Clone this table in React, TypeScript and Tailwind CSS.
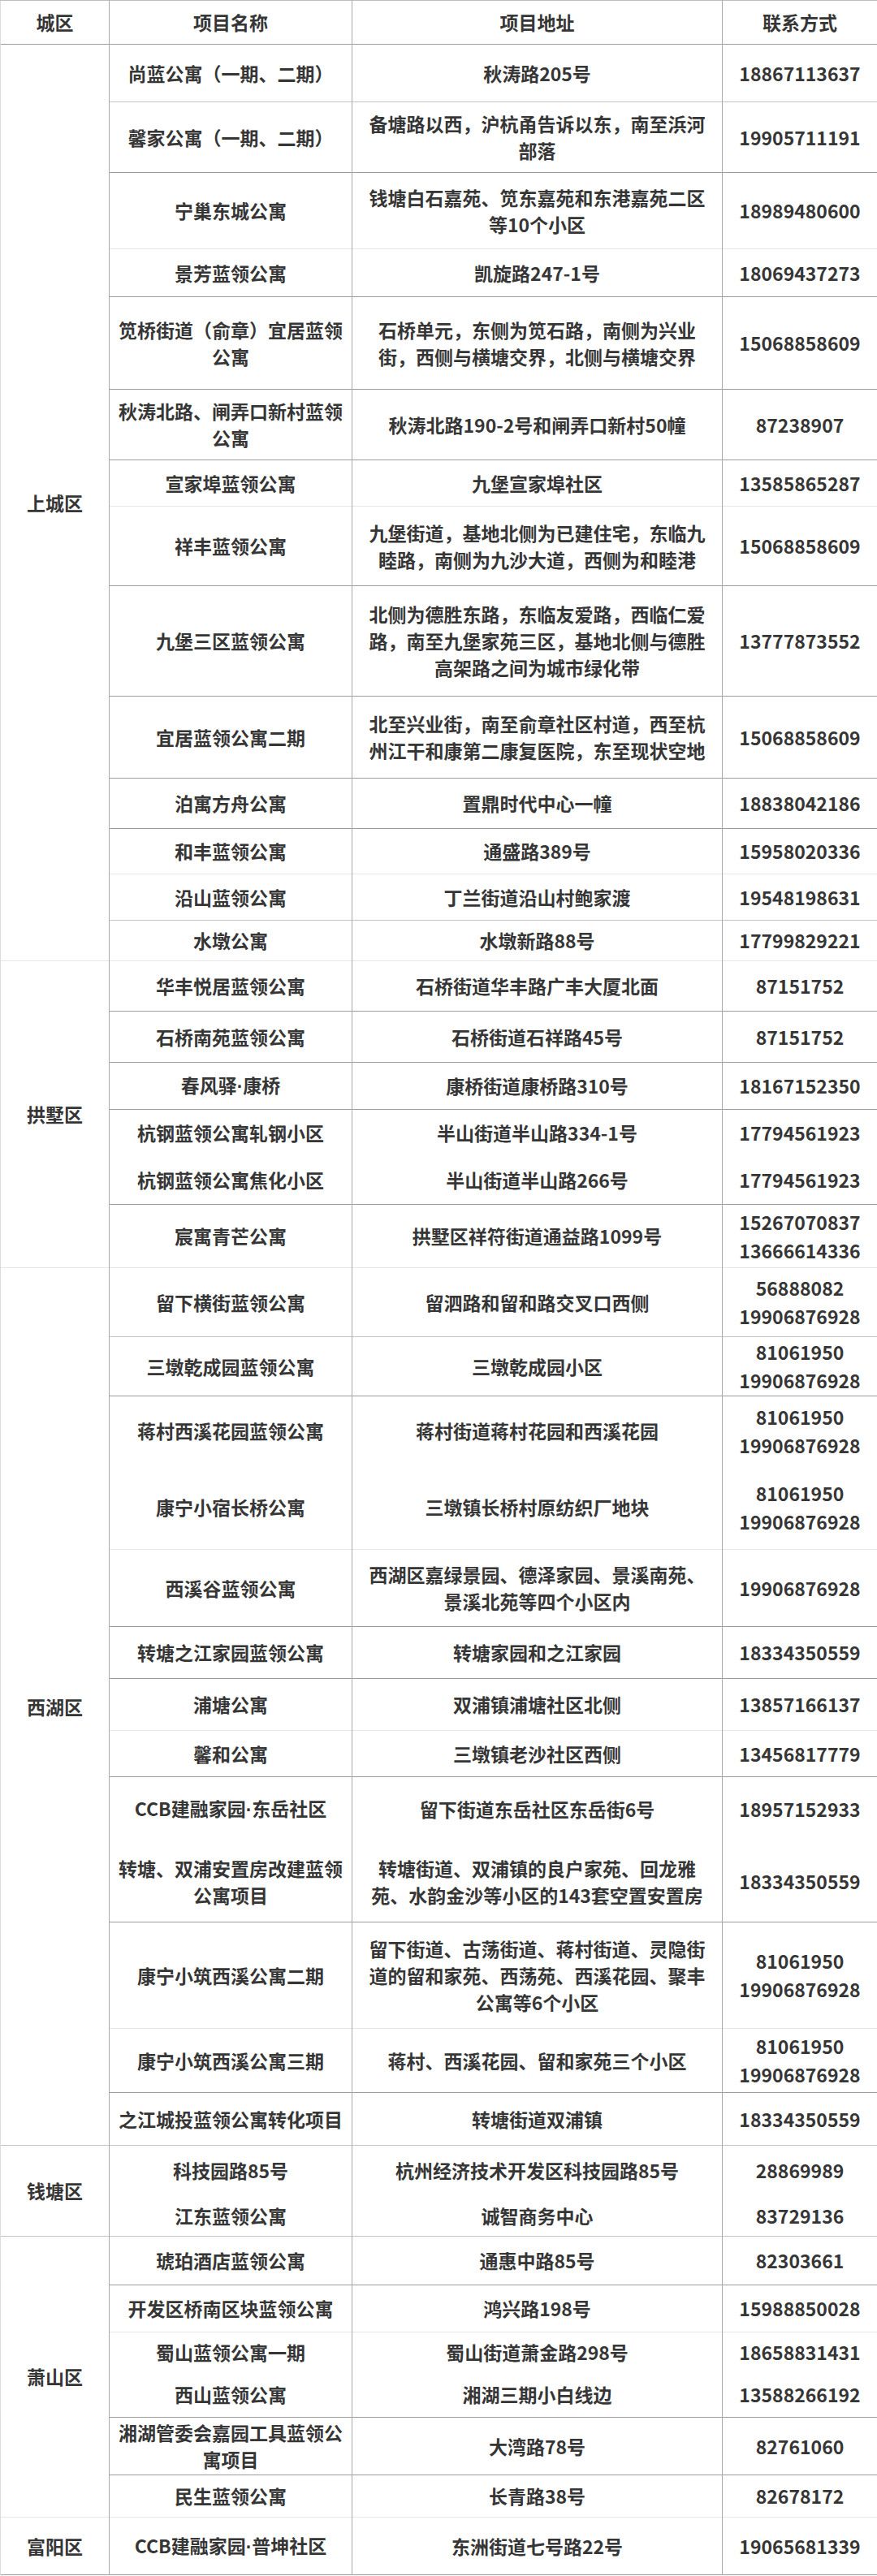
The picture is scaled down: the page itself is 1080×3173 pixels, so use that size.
type Row = {
  name: string;
  addr: string;
  phones: string[];
  h: string;
  line: string;
};

type Group = {
  district: string;
  line: string;
  rows: Row[];
};

const STRONG = "border-t border-t-[#9c9c9c]";
const MID = "border-t border-t-[#c4c4c4]";
const FAINT = "border-t border-t-[#e6e6e6]";
const NONE = "";

const groups: Group[] = [
  {
    district: "上城区",
    line: STRONG,
    rows: [
      { name: "尚蓝公寓（一期、二期）", addr: "秋涛路205号", phones: ["18867113637"], h: "h-[71px]", line: STRONG },
      { name: "馨家公寓（一期、二期）", addr: "备塘路以西，沪杭甬告诉以东，南至浜河部落", phones: ["19905711191"], h: "h-[87px]", line: MID },
      { name: "宁巢东城公寓", addr: "钱塘白石嘉苑、笕东嘉苑和东港嘉苑二区等10个小区", phones: ["18989480600"], h: "h-[94px]", line: STRONG },
      { name: "景芳蓝领公寓", addr: "凯旋路247-1号", phones: ["18069437273"], h: "h-[59px]", line: FAINT },
      { name: "笕桥街道（俞章）宜居蓝领公寓", addr: "石桥单元，东侧为笕石路，南侧为兴业街，西侧与横塘交界，北侧与横塘交界", phones: ["15068858609"], h: "h-[114px]", line: STRONG },
      { name: "秋涛北路、闸弄口新村蓝领公寓", addr: "秋涛北路190-2号和闸弄口新村50幢", phones: ["87238907"], h: "h-[87px]", line: STRONG },
      { name: "宣家埠蓝领公寓", addr: "九堡宣家埠社区", phones: ["13585865287"], h: "h-[57px]", line: STRONG },
      { name: "祥丰蓝领公寓", addr: "九堡街道，基地北侧为已建住宅，东临九睦路，南侧为九沙大道，西侧为和睦港", phones: ["15068858609"], h: "h-[98px]", line: FAINT },
      { name: "九堡三区蓝领公寓", addr: "北侧为德胜东路，东临友爱路，西临仁爱路，南至九堡家苑三区，基地北侧与德胜高架路之间为城市绿化带", phones: ["13777873552"], h: "h-[136px]", line: STRONG },
      { name: "宜居蓝领公寓二期", addr: "北至兴业街，南至俞章社区村道，西至杭州江干和康第二康复医院，东至现状空地", phones: ["15068858609"], h: "h-[101px]", line: STRONG },
      { name: "泊寓方舟公寓", addr: "置鼎时代中心一幢", phones: ["18838042186"], h: "h-[62px]", line: STRONG },
      { name: "和丰蓝领公寓", addr: "通盛路389号", phones: ["15958020336"], h: "h-[56px]", line: STRONG },
      { name: "沿山蓝领公寓", addr: "丁兰街道沿山村鲍家渡", phones: ["19548198631"], h: "h-[57px]", line: FAINT },
      { name: "水墩公寓", addr: "水墩新路88号", phones: ["17799829221"], h: "h-[50px]", line: MID },
    ],
  },
  {
    district: "拱墅区",
    line: FAINT,
    rows: [
      { name: "华丰悦居蓝领公寓", addr: "石桥街道华丰路广丰大厦北面", phones: ["87151752"], h: "h-[62px]", line: FAINT },
      { name: "石桥南苑蓝领公寓", addr: "石桥街道石祥路45号", phones: ["87151752"], h: "h-[63px]", line: STRONG },
      { name: "春风驿·康桥", addr: "康桥街道康桥路310号", phones: ["18167152350"], h: "h-[58px]", line: STRONG },
      { name: "杭钢蓝领公寓轧钢小区", addr: "半山街道半山路334-1号", phones: ["17794561923"], h: "h-[58px]", line: STRONG },
      { name: "杭钢蓝领公寓焦化小区", addr: "半山街道半山路266号", phones: ["17794561923"], h: "h-[59px]", line: NONE },
      { name: "宸寓青芒公寓", addr: "拱墅区祥符街道通益路1099号", phones: ["15267070837", "13666614336"], h: "h-[78px]", line: STRONG },
    ],
  },
  {
    district: "西湖区",
    line: FAINT,
    rows: [
      { name: "留下横街蓝领公寓", addr: "留泗路和留和路交叉口西侧", phones: ["56888082", "19906876928"], h: "h-[85px]", line: FAINT },
      { name: "三墩乾成园蓝领公寓", addr: "三墩乾成园小区", phones: ["81061950", "19906876928"], h: "h-[73px]", line: MID },
      { name: "蒋村西溪花园蓝领公寓", addr: "蒋村街道蒋村花园和西溪花园", phones: ["81061950", "19906876928"], h: "h-[86px]", line: STRONG },
      { name: "康宁小宿长桥公寓", addr: "三墩镇长桥村原纺织厂地块", phones: ["81061950", "19906876928"], h: "h-[103px]", line: NONE },
      { name: "西溪谷蓝领公寓", addr: "西湖区嘉绿景园、德泽家园、景溪南苑、景溪北苑等四个小区内", phones: ["19906876928"], h: "h-[95px]", line: FAINT },
      { name: "转塘之江家园蓝领公寓", addr: "转塘家园和之江家园", phones: ["18334350559"], h: "h-[64px]", line: STRONG },
      { name: "浦塘公寓", addr: "双浦镇浦塘社区北侧", phones: ["13857166137"], h: "h-[64px]", line: STRONG },
      { name: "馨和公寓", addr: "三墩镇老沙社区西侧", phones: ["13456817779"], h: "h-[57px]", line: FAINT },
      { name: "CCB建融家园·东岳社区", addr: "留下街道东岳社区东岳街6号", phones: ["18957152933"], h: "h-[80px]", line: STRONG },
      { name: "转塘、双浦安置房改建蓝领公寓项目", addr: "转塘街道、双浦镇的良户家苑、回龙雅苑、水韵金沙等小区的143套空置安置房", phones: ["18334350559"], h: "h-[99px]", line: NONE },
      { name: "康宁小筑西溪公寓二期", addr: "留下街道、古荡街道、蒋村街道、灵隐街道的留和家苑、西荡苑、西溪花园、聚丰公寓等6个小区", phones: ["81061950", "19906876928"], h: "h-[131px]", line: STRONG },
      { name: "康宁小筑西溪公寓三期", addr: "蒋村、西溪花园、留和家苑三个小区", phones: ["81061950", "19906876928"], h: "h-[79px]", line: FAINT },
      { name: "之江城投蓝领公寓转化项目", addr: "转塘街道双浦镇", phones: ["18334350559"], h: "h-[65px]", line: STRONG },
    ],
  },
  {
    district: "钱塘区",
    line: MID,
    rows: [
      { name: "科技园路85号", addr: "杭州经济技术开发区科技园路85号", phones: ["28869989"], h: "h-[62px]", line: MID },
      { name: "江东蓝领公寓", addr: "诚智商务中心", phones: ["83729136"], h: "h-[50px]", line: NONE },
    ],
  },
  {
    district: "萧山区",
    line: MID,
    rows: [
      { name: "琥珀酒店蓝领公寓", addr: "通惠中路85号", phones: ["82303661"], h: "h-[60px]", line: MID },
      { name: "开发区桥南区块蓝领公寓", addr: "鸿兴路198号", phones: ["15988850028"], h: "h-[58px]", line: STRONG },
      { name: "蜀山蓝领公寓一期", addr: "蜀山街道萧金路298号", phones: ["18658831431"], h: "h-[50px]", line: FAINT },
      { name: "西山蓝领公寓", addr: "湘湖三期小白线边", phones: ["13588266192"], h: "h-[55px]", line: NONE },
      { name: "湘湖管委会嘉园工具蓝领公寓项目", addr: "大湾路78号", phones: ["82761060"], h: "h-[71px]", line: STRONG },
      { name: "民生蓝领公寓", addr: "长青路38号", phones: ["82678172"], h: "h-[52px]", line: STRONG },
    ],
  },
  {
    district: "富阳区",
    line: FAINT,
    rows: [
      { name: "CCB建融家园·普坤社区", addr: "东洲街道七号路22号", phones: ["19065681339"], h: "h-[71px]", line: FAINT },
    ],
  },
];

const cell = "border-l border-r border-l-[#aaaaaa] border-r-[#aaaaaa] text-center align-middle";

// the middle dot is full width in the CJK font; the original has a narrow one
function Name({ text }: { text: string }) {
  const parts = text.split("·");
  if (parts.length === 1) return <>{text}</>;
  return (
    <>
      {parts[0]}
      <span className="font-['Liberation_Sans',sans-serif]">·</span>
      {parts[1]}
    </>
  );
}

export default function App() {
  return (
    <div className="w-[1080px] bg-white font-['Noto_Sans_CJK_SC',sans-serif] text-[23px] leading-[33px] font-bold text-[#363636]">
      <table className="w-[1080px] table-fixed border-collapse border-b border-b-[#9c9c9c]">
        <colgroup>
          <col className="w-[134px]" />
          <col className="w-[299px]" />
          <col className="w-[456px]" />
          <col className="w-[191px]" />
        </colgroup>
        <thead>
          <tr className="h-[54px]">
            <th className={`${cell} border-t border-t-[#bdbdbd] border-l-[#dcdcdc] font-bold`}>城区</th>
            <th className={`${cell} border-t border-t-[#bdbdbd] font-bold`}>项目名称</th>
            <th className={`${cell} border-t border-t-[#bdbdbd] font-bold`}>项目地址</th>
            <th className={`${cell} border-t border-t-[#bdbdbd] font-bold`}>联系方式</th>
          </tr>
        </thead>
        <tbody>
          {groups.map((g) =>
            g.rows.map((r, i) => (
              <tr key={g.district + r.name + i} className={r.h}>
                {i === 0 && (
                  <td rowSpan={g.rows.length} className={`${cell} ${g.line} border-l-[#dcdcdc]`}>
                    {g.district}
                  </td>
                )}
                <td className={`${cell} ${r.line} px-[8px]`}>
                  <Name text={r.name} />
                </td>
                <td className={`${cell} ${r.line} px-[16px]`}>{r.addr}</td>
                <td className={`${cell} ${r.line} px-[4px]`}>
                  {r.phones.map((p) => (
                    <div key={p} className="leading-[35px]">
                      {p}
                    </div>
                  ))}
                </td>
              </tr>
            ))
          )}
        </tbody>
      </table>
    </div>
  );
}
